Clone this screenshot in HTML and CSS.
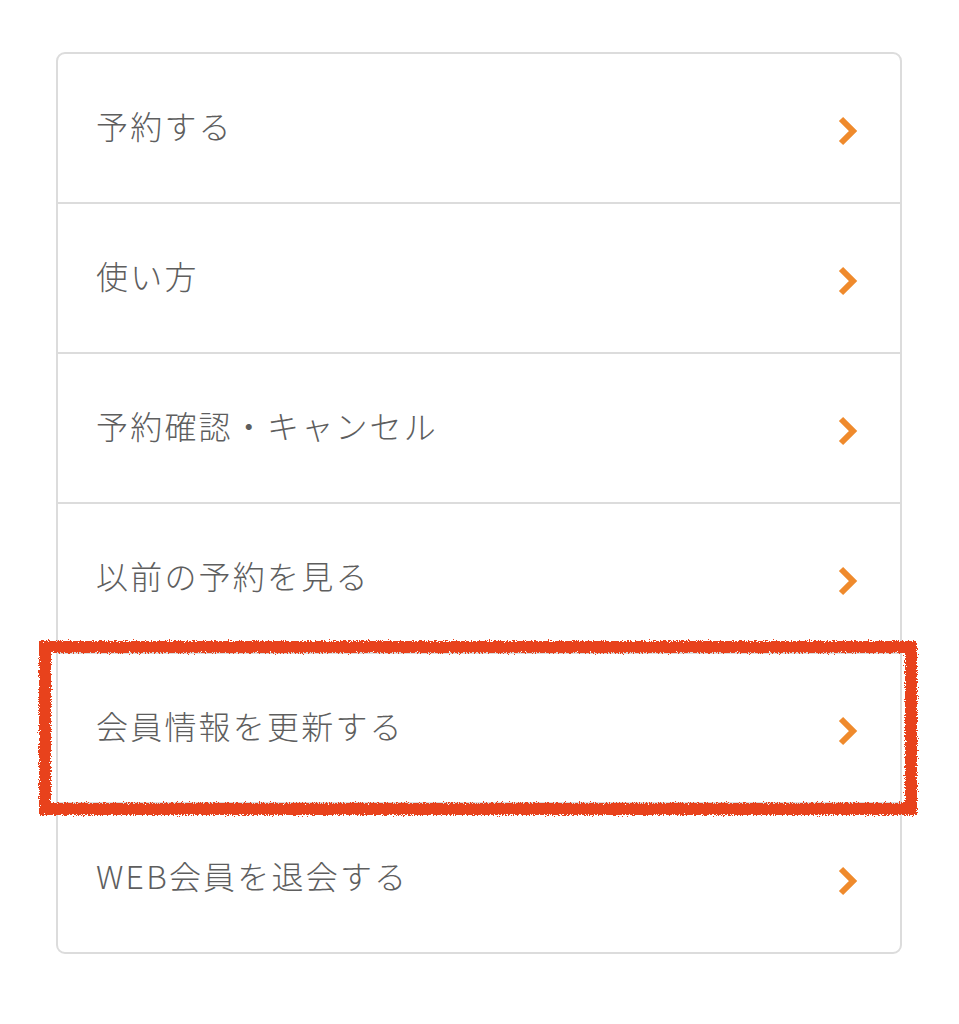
FILE: index.html
```html
<!DOCTYPE html>
<html lang="ja">
<head>
<meta charset="UTF-8" />
<meta name="viewport" content="width=device-width, initial-scale=1" />
<title>メニュー</title>
<link rel="stylesheet" href="styles.css">
</head>
<body>
<div class="page">
    <ul class="menu">
        <li class="menu-item"><span class="label">予約する</span><svg class="arrow" viewBox="0 0 20 30"><polyline points="3,3 15,15 3,27"/></svg></li>
        <li class="menu-item"><span class="label">使い方</span><svg class="arrow" viewBox="0 0 20 30"><polyline points="3,3 15,15 3,27"/></svg></li>
        <li class="menu-item"><span class="label">予約確認・キャンセル</span><svg class="arrow" viewBox="0 0 20 30"><polyline points="3,3 15,15 3,27"/></svg></li>
        <li class="menu-item"><span class="label">以前の予約を見る</span><svg class="arrow" viewBox="0 0 20 30"><polyline points="3,3 15,15 3,27"/></svg></li>
        <li class="menu-item"><span class="label">会員情報を更新する</span><svg class="arrow" viewBox="0 0 20 30"><polyline points="3,3 15,15 3,27"/></svg></li>
        <li class="menu-item"><span class="label">WEB会員を退会する</span><svg class="arrow" viewBox="0 0 20 30"><polyline points="3,3 15,15 3,27"/></svg></li>
    </ul>

    <!-- 手書き風の強調枠 -->
    <svg class="highlight" viewBox="0 0 884 178">
        <defs>
            <filter id="rough" x="-5%" y="-10%" width="110%" height="120%">
                <feTurbulence type="fractalNoise" baseFrequency="0.8" numOctaves="3" seed="5" result="noise"/>
                <feDisplacementMap in="SourceGraphic" in2="noise" scale="6" xChannelSelector="R" yChannelSelector="G"/>
            </filter>
        </defs>
        <rect x="8" y="8" width="866" height="162" fill="none" stroke="#e8421f" stroke-width="12" filter="url(#rough)"/>
    </svg>
</div>
</body>
</html>
```

FILE: styles.css
```css
body{
    margin: 0;
    padding: 0;
    background-color: #fff;
    font-family: "Noto Sans CJK JP", "Noto Sans", sans-serif;
}
.page{
    position: relative;
    padding: 52px 0 0 56px;
}
.menu{
    list-style: none;
    margin: 0;
    padding: 0;
    width: 842px;
    border: 2px solid #dcdcdc;
    border-radius: 9px;
    overflow: hidden;
}
.menu-item{
    height: 148px;
    display: flex;
    align-items: center;
    justify-content: space-between;
    padding: 0 42px 0 38px;
    border-bottom: 2px solid #dcdcdc;
}
.menu-item:last-child{
    border-bottom: none;
}
.label{
    font-size: 32px;
    font-weight: 300;
    color: #5e5e5e;
    letter-spacing: 2.2px;
    margin-top: -6px;
}
.arrow{
    width: 20px;
    height: 30px;
    margin-top: 6px;
}
.arrow polyline{
    fill: none;
    stroke: #ef8a2c;
    stroke-width: 6;
}
.highlight{
    position: absolute;
    left: 37px;
    top: 639px;
    width: 884px;
    height: 178px;
}
```
